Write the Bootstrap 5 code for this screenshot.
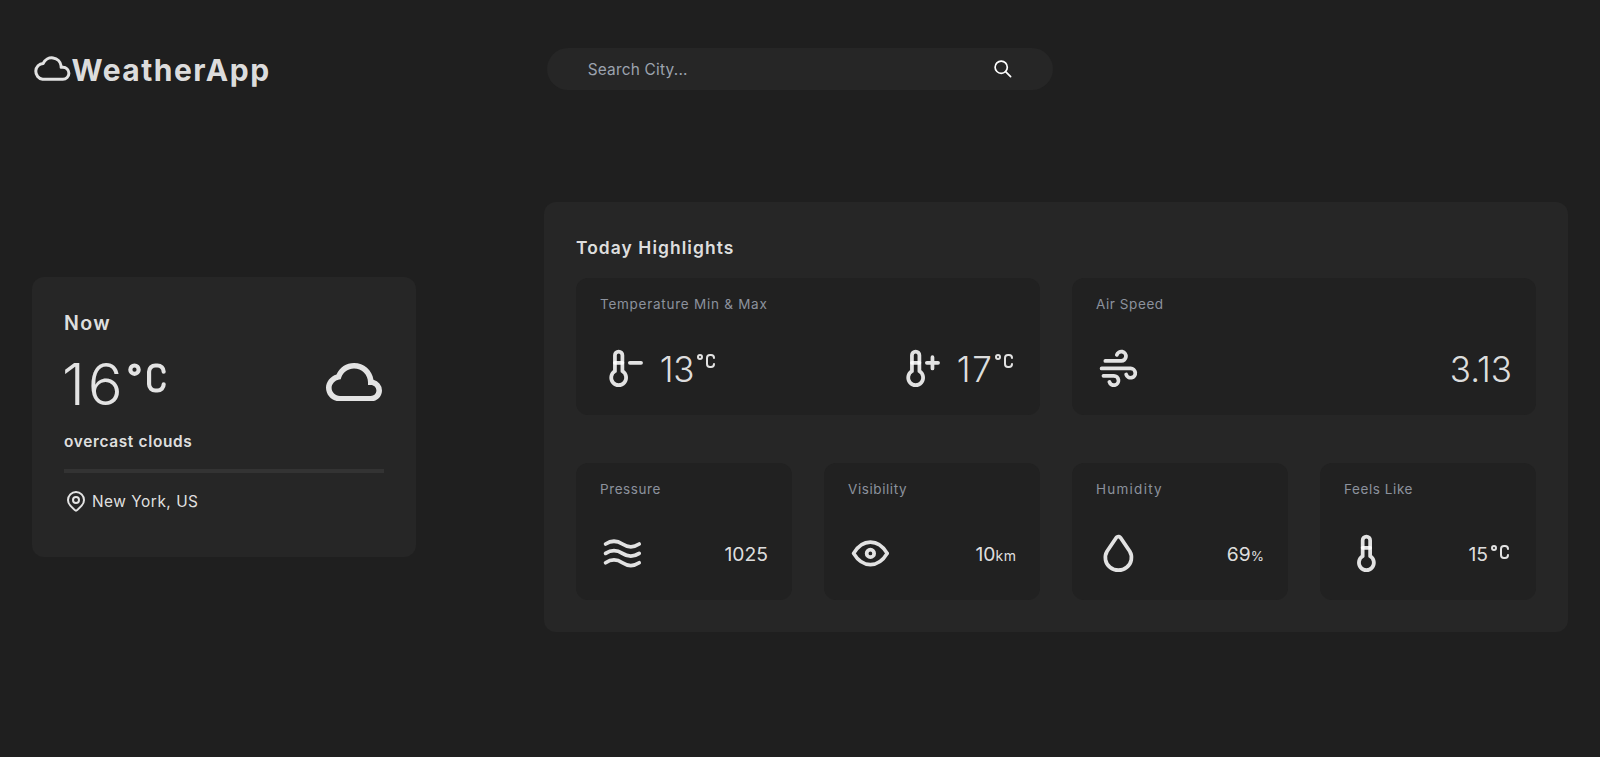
<!DOCTYPE html>
<html lang="en">
<head>
<meta charset="utf-8">
<meta name="viewport" content="width=device-width, initial-scale=1">
<title>WeatherApp</title>
<link href="https://cdn.jsdelivr.net/npm/bootstrap@5.3.0/dist/css/bootstrap.min.css" rel="stylesheet">
<style>
  body { background: #1f1f1f; color: rgba(255,255,255,.87); font-family: Inter, "Open Sans", sans-serif; min-height: 100vh; overflow: hidden; }
  svg { display: block; flex: none; }
  .ico { fill: none; stroke: currentColor; stroke-width: 2; stroke-linecap: round; stroke-linejoin: round; }
  .header-grid { display: grid; grid-template-columns: repeat(3, 1fr); gap: 8px; padding: 48px 32px 0; }
  .brand { font-size: 30px; font-weight: 700; line-height: 40px; height: 42px; letter-spacing: 1.5px; }
  .brand span { padding-top: 2px; }
  .brand svg { margin: -2px 1px 0 1px; }
  .search { background: #262626; border-radius: 21px; height: 42px; padding: 0 41px; }
  .search input { background: none; border: 0; outline: 0; padding: 2px 0 0; font-size: 15.4px; letter-spacing: .22px; color: inherit; }
  .search input::placeholder { color: #9ca3af; opacity: 1; }
  .search button { color: #fff; }
  .content { padding: 0 32px; margin-top: 112px; }
  .panel { background: #262626; border-radius: 12px; padding: 32px; }
  .now-panel { width: 384px; height: 280px; }
  .now-title { font-size: 19.6px; font-weight: 600; line-height: 28px; letter-spacing: 1.4px; }
  .now-row { height: 76px; }
  .now-temp { font-size: 58px; font-weight: 300; line-height: 76px; padding-top: 1px; width: 60px; margin-left: -2px; letter-spacing: 3px; white-space: nowrap; }
  .now-desc { font-size: 15.4px; font-weight: 600; line-height: 24px; height: 24px; padding-top: 1px; letter-spacing: .68px; }
  .rule { height: 4px; background: #333; }
  .place { font-size: 15.4px; line-height: 24px; letter-spacing: .52px; height: 24px; }
  .place span { padding-top: 2px; }
  .highlights { width: 1024px; height: 430px; }
  .hl-title { font-size: 17.4px; font-weight: 600; line-height: 28px; letter-spacing: 1.08px; }
  .tiles { display: grid; grid-template-columns: repeat(4, 216px); gap: 48px 32px; }
  .tile { background: #212121; border-radius: 12px; padding: 16px 24px 0; height: 137px; }
  .tile-wide { grid-column: span 2; }
  .tile-label { font-size: 13.5px; line-height: 20px; color: #8c929d; letter-spacing: .58px; margin-bottom: 32px; }
  .label-loose { letter-spacing: .74px; }
  .label-looser { letter-spacing: 1.25px; }
  .tile-row { height: 45px; }
  .big { font-size: 35px; font-weight: 300; line-height: 45px; padding-top: 1px; letter-spacing: 0; white-space: nowrap; }
  .big-min { width: 33px; text-indent: -1px; letter-spacing: -.3px; }
  .big-max { width: 34.2px; text-indent: -1px; letter-spacing: 1.6px; }
  .mid { font-size: 19.3px; line-height: 45px; padding-top: 1px; }
  .unit { font-size: 13.5px; }
  .unit-km { letter-spacing: .6px; font-size: 14px; margin-right: -.6px; }
  .deg { margin-top: 3px; }
</style>
</head>
<body>
<svg width="0" height="0" class="position-absolute" aria-hidden="true">
  <symbol id="cloud" viewBox="2 5 20 14" preserveAspectRatio="none"><path fill="currentColor" d="M18.944 11.112C18.507 7.67 15.56 5 12 5 9.244 5 6.85 6.611 5.757 9.15 3.609 9.792 2 11.82 2 14c0 2.757 2.243 5 5 5h11c2.206 0 4-1.794 4-4a4.01 4.01 0 0 0-3.056-3.888zM18 17H7c-1.654 0-3-1.346-3-3 0-1.404 1.199-2.756 2.673-3.015l.581-.102.192-.558C8.149 8.274 9.895 7 12 7c2.757 0 5 2.243 5 5v1h1c1.103 0 2 .897 2 2s-.897 2-2 2z"/></symbol>
  <symbol id="celsius" viewBox="0 0 24 24"><circle cx="6" cy="8" r="2"/><path d="M20 9a3 3 0 0 0-3-3h-1a3 3 0 0 0-3 3v6a3 3 0 0 0 3 3h1a3 3 0 0 0 3-3"/></symbol>
</svg>

<header class="header-grid">
  <div class="brand d-flex align-items-center">
    <svg width="37.5" height="25.8" viewBox="0 0 37.5 25.8" fill="none" stroke="currentColor" stroke-width="3" stroke-linejoin="round"><path d="M9.6 24.2h20.3a6 6 0 0 0 0-12h-1.8v-1.3A9.4 9.4 0 0 0 10.2 8.4a7.95 7.95 0 0 0-.6 15.8z"/></svg>
    <span>WeatherApp</span>
  </div>
  <form class="search d-flex align-items-center">
    <input class="flex-grow-1" type="text" placeholder="Search City..." aria-label="Search City">
    <button type="button" class="btn p-0 border-0" aria-label="Search">
      <svg width="18" height="18" viewBox="0 0 18 18" fill="none" stroke="currentColor" stroke-width="1.7" stroke-linecap="round"><circle cx="7.2" cy="7.2" r="6.1"/><path d="M11.6 11.6l5 5"/></svg>
    </button>
  </form>
</header>

<main class="content d-flex justify-content-between align-items-center">
  <section class="panel now-panel">
    <div class="now-title mb-2">Now</div>
    <div class="now-row d-flex">
      <span class="now-temp">16</span>
      <svg class="ico mt-2" width="50" height="50"><use href="#celsius"/></svg>
      <svg class="ms-auto" width="56" height="38.4" style="margin:18px 2px 0 0"><use href="#cloud"/></svg>
    </div>
    <div class="now-desc mt-2">overcast clouds</div>
    <div class="rule my-3"></div>
    <div class="place d-flex align-items-center gap-1">
      <svg class="ico" width="24" height="24" viewBox="0 0 24 24"><circle cx="12" cy="11" r="3"/><path d="M17.657 16.657l-4.243 4.243a2 2 0 0 1-2.827 0l-4.244-4.243a8 8 0 1 1 11.314 0z"/></svg>
      <span>New York, US</span>
    </div>
  </section>

  <section class="panel highlights">
    <div class="hl-title mb-3">Today Highlights</div>
    <div class="tiles">
      <div class="tile tile-wide">
        <div class="tile-label label-loose">Temperature Min &amp; Max</div>
        <div class="tile-row d-flex">
          <svg class="ico me-3" width="44.8" height="44.8" viewBox="0 0 24 24"><path d="M8 13.5a4 4 0 1 0 4 0v-8.5a2 2 0 1 0-4 0v8.5"/><path d="M8 9h4"/><path d="M16 9h6"/></svg>
          <span class="big big-min">13</span>
          <svg class="ico deg" width="24" height="24"><use href="#celsius"/></svg>
          <svg class="ico me-3 ms-auto" width="44.8" height="44.8" viewBox="0 0 24 24"><path d="M8 13.5a4 4 0 1 0 4 0v-8.5a2 2 0 1 0-4 0v8.5"/><path d="M8 9h4"/><path d="M16 9h6M19 6v6"/></svg>
          <span class="big big-max">17</span>
          <svg class="ico deg" width="24" height="24"><use href="#celsius"/></svg>
        </div>
      </div>
      <div class="tile tile-wide">
        <div class="tile-label">Air Speed</div>
        <div class="tile-row d-flex justify-content-between">
          <svg class="ico" width="44.8" height="44.8" viewBox="0 0 24 24"><path d="M5 8h8.5a2.5 2.5 0 1 0-2.34-3.24M3 12h15.5a2.5 2.5 0 1 1-2.34 3.24M4 16h5.5a2.5 2.5 0 1 1-2.34 3.24"/></svg>
          <span class="big">3.13</span>
        </div>
      </div>
      <div class="tile">
        <div class="tile-label">Pressure</div>
        <div class="tile-row d-flex justify-content-between">
          <svg class="ico" width="44.8" height="44.8" viewBox="0 0 24 24"><path d="M3 7c3-2 6-2 9 0s6 2 9 0M3 17c3-2 6-2 9 0s6 2 9 0M3 12c3-2 6-2 9 0s6 2 9 0"/></svg>
          <span class="mid">1025</span>
        </div>
      </div>
      <div class="tile">
        <div class="tile-label">Visibility</div>
        <div class="tile-row d-flex justify-content-between">
          <svg class="ico" width="44.8" height="44.8" viewBox="0 0 24 24"><circle cx="12" cy="12" r="2"/><path d="M21 12c-2.4 4-5.4 6-9 6s-6.6-2-9-6c2.4-4 5.4-6 9-6s6.6 2 9 6"/></svg>
          <span class="mid">10<span class="unit unit-km">km</span></span>
        </div>
      </div>
      <div class="tile">
        <div class="tile-label label-looser">Humidity</div>
        <div class="tile-row d-flex justify-content-between">
          <svg class="ico" width="44.8" height="44.8" viewBox="0 0 24 24"><path d="M7.502 19.423c2.602 2.105 6.395 2.105 8.996 0c2.602-2.105 3.262-5.708 1.566-8.546l-4.89-7.26c-.42-.625-1.287-.803-1.936-.397a1.376 1.376 0 0 0-.41.397l-4.893 7.26c-1.695 2.838-1.035 6.441 1.567 8.546"/></svg>
          <span class="mid">69<span class="unit">%</span></span>
        </div>
      </div>
      <div class="tile">
        <div class="tile-label">Feels Like</div>
        <div class="tile-row d-flex">
          <svg class="ico me-auto" width="44.8" height="44.8" viewBox="0 0 24 24"><path d="M10 13.5a4 4 0 1 0 4 0v-8.5a2 2 0 0 0-4 0v8.5"/><path d="M10 9h4"/></svg>
          <span class="mid">15</span>
          <svg class="ico" width="24" height="24" style="margin-top:9px"><use href="#celsius"/></svg>
        </div>
      </div>
    </div>
  </section>
</main>
<script src="https://cdn.jsdelivr.net/npm/bootstrap@5.3.0/dist/js/bootstrap.bundle.min.js"></script>
</body>
</html>
